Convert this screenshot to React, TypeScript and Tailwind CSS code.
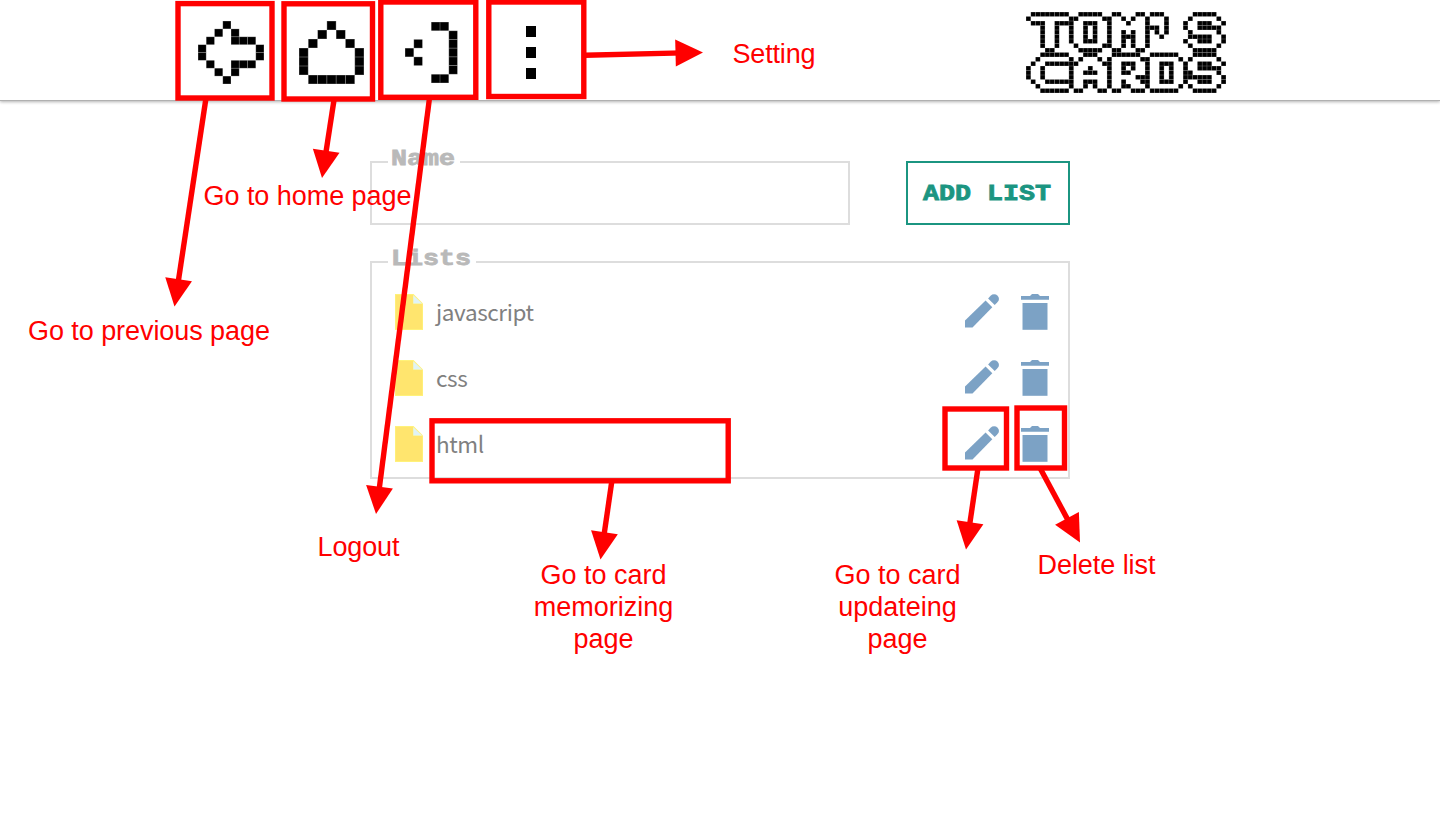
import React from "react";

type Run = [number, number];

// Each row lists the inclusive column runs that are inked.
const LOGO: Run[][] = [
  [[1, 8], [11, 15], [18, 19], [23, 24], [26, 28], [35, 39]],
  [[0, 0], [9, 10], [16, 17], [20, 20], [22, 22], [25, 25], [29, 29], [34, 34], [40, 40]],
  [[1, 3], [6, 9], [12, 14], [17, 17], [21, 21], [25, 25], [29, 29], [33, 33], [36, 38], [41, 41]],
  [[3, 3], [6, 6], [9, 9], [12, 12], [14, 14], [17, 17], [25, 27], [29, 29], [33, 33], [36, 40]],
  [[3, 3], [6, 6], [9, 9], [12, 12], [14, 14], [17, 17], [20, 20], [22, 22], [25, 25], [27, 27], [29, 29], [34, 34], [40, 40]],
  [[3, 3], [6, 6], [9, 9], [12, 12], [14, 14], [17, 17], [20, 22], [25, 25], [28, 28], [34, 38], [41, 41]],
  [[3, 3], [6, 6], [9, 9], [12, 14], [17, 17], [20, 20], [22, 22], [25, 25], [33, 33], [36, 38], [41, 41]],
  [[3, 3], [6, 6], [10, 10], [16, 17], [20, 20], [22, 22], [25, 25], [34, 34], [40, 40]],
  [[4, 5], [11, 15], [18, 19], [23, 24], [35, 39]],
  [[3, 8], [12, 14], [18, 23], [26, 31], [35, 39]],
  [[2, 2], [9, 9], [11, 11], [15, 15], [17, 17], [24, 25], [32, 32], [34, 34], [40, 40]],
  [[1, 1], [4, 10], [16, 17], [20, 22], [25, 25], [28, 30], [33, 33], [36, 38], [41, 41]],
  [[0, 0], [3, 3], [9, 9], [13, 13], [17, 17], [20, 20], [22, 22], [25, 25], [28, 28], [30, 30], [33, 33], [36, 40]],
  [[0, 0], [3, 3], [9, 9], [12, 14], [17, 17], [20, 21], [25, 25], [28, 28], [30, 30], [33, 34], [40, 40]],
  [[0, 0], [3, 3], [9, 9], [17, 17], [23, 25], [28, 28], [30, 30], [33, 38], [41, 41]],
  [[1, 1], [4, 9], [12, 14], [17, 17], [20, 20], [24, 25], [28, 30], [33, 33], [36, 38], [41, 41]],
  [[2, 2], [9, 9], [12, 12], [14, 14], [17, 17], [20, 21], [25, 25], [32, 32], [34, 34], [40, 40]],
  [[3, 8], [10, 11], [15, 16], [18, 19], [22, 24], [26, 31], [35, 39]],
];

const BACK: Run[][] = [
  [[3, 3]], [[2, 2], [4, 4]], [[1, 1], [4, 6]], [[0, 0], [7, 7]],
  [[0, 0], [7, 7]], [[1, 1], [4, 6]], [[2, 2], [4, 4]], [[3, 3]],
];
const HOME: Run[][] = [
  [[3, 3]], [[2, 2], [4, 4]], [[1, 1], [5, 5]], [[0, 0], [6, 6]],
  [[0, 0], [6, 6]], [[0, 0], [6, 6]], [[1, 5]],
];
const LOGOUT: Run[][] = [
  [[3, 4]], [[5, 5]], [[1, 1], [5, 5]], [[0, 0], [5, 5]],
  [[1, 1], [5, 5]], [[5, 5]], [[3, 4]],
];

function Pixels({ rows, cols, className, label, seam }: { rows: Run[][]; cols: number; className: string; label: string; seam: number }) {
  return (
    <svg viewBox={`0 0 ${cols} ${rows.length}`} preserveAspectRatio="none" className={className} role="img" aria-label={label}>
      {rows.flatMap((row, y) =>
        row.flatMap(([a, b]) =>
          Array.from({ length: b - a + 1 }, (_, i) => (
            <g key={`${y}-${a + i}`}>
              <rect x={a + i} y={y} width={1} height={1} fill="#555" />
              <rect x={a + i + seam} y={y + seam} width={1 - 2 * seam} height={1 - 2 * seam} fill="#000" />
            </g>
          ))
        )
      )}
    </svg>
  );
}

function FileIcon() {
  return (
    <svg viewBox="0 0 28 36" className="block h-9 w-7">
      <path d="M0 0h18.5L28 9.500V36H0z" fill="#fff27a" />
      <path d="M.8 1H18v9h9.200v25H.8z" fill="#ffe56e" />
      <path d="M18.300 1.200V9.500H27z" fill="#e0f3f6" />
    </svg>
  );
}

function PencilIcon() {
  return (
    <svg viewBox="0 0 34 34" className="block h-[34px] w-[34px]" fill="#7ca2c5">
      <path d="M0 26.500 20.600 6.600 27.300 13.300 7.500 33.600H0z" />
      <path d="M23.100 4.500 25.600 1.700A5 5 0 0 1 32.600 1.700 5 5 0 0 1 32.400 8.300L29.700 11z" />
    </svg>
  );
}

function TrashIcon() {
  return (
    <svg viewBox="0 0 28 36" className="block h-9 w-7" fill="#7ca2c5">
      <path d="M0 2h9l2-2h6l2 2h9v3.800H0z" />
      <path d="M1.500 9h25v26.800h-25z" />
    </svg>
  );
}

function Row({ name }: { name: string }) {
  return (
    <li className="flex h-[66px] items-center pr-[19px] pl-[23px]">
      <FileIcon />
      <span className="mb-[2px] ml-[13px] grow font-['Noto_Sans_CJK_SC','Noto_Sans',sans-serif] text-[22.5px] leading-9 tracking-[-0.4px] text-[#808080]">{name}</span>
      <button className="mr-[22px] mb-[2px]" aria-label="Edit"><PencilIcon /></button>
      <button aria-label="Delete"><TrashIcon /></button>
    </li>
  );
}

function PixelText({ children }: { children: React.ReactNode }) {
  return (
    <span className="inline-block origin-left scale-x-[1.212] font-['Liberation_Mono',monospace] text-[22px] leading-6 font-bold whitespace-pre [-webkit-text-stroke:0.8px_currentColor]">
      {children}
    </span>
  );
}

const BOXES = [
  [178, 3.6, 94, 94.400], [284, 3.8, 88.500, 95.200], [380.800, 2, 95, 95.300], [488.800, 2, 95, 94.500],
  [432, 420.800, 296.200, 60], [945, 409, 61.500, 59], [1017, 408, 47.500, 60],
];

// Start point, then the tip of the arrow head.
const ARROWS = [
  [206, 98, 174.500, 306.500], [334, 100, 322, 178], [429.500, 98, 376, 514], [585, 55.300, 703, 52.400],
  [612, 480, 600.500, 559.500], [978, 468, 966, 549.500], [1040, 468, 1080, 542.500],
];

function Arrow({ p }: { p: number[] }) {
  const [x1, y1, x2, y2] = p;
  const len = Math.hypot(x2 - x1, y2 - y1);
  const angle = (Math.atan2(y2 - y1, x2 - x1) * 180) / Math.PI;
  return (
    <g transform={`translate(${x1} ${y1}) rotate(${angle})`}>
      <path d={`M0 0H${len - 20}`} stroke="#f00" strokeWidth="5.4" />
      <path d={`M${len} 0l-27.500 -13.500v27z`} fill="#f00" />
    </g>
  );
}

const NOTES = [
  { lines: ["Setting"], x: 774, y: 62.500, w: 83 },
  { lines: ["Go to home page"], x: 307.500, y: 204.500, w: 208 },
  { lines: ["Go to previous page"], x: 149, y: 340, w: 242 },
  { lines: ["Logout"], x: 358.500, y: 555.500, w: 82 },
  { lines: ["Go to card", "memorizing", "page"], x: 603.500, y: 584, w: 0 },
  { lines: ["Go to card", "updateing", "page"], x: 897.500, y: 584, w: 0 },
  { lines: ["Delete list"], x: 1096.500, y: 574, w: 118 },
];

function Annotations() {
  return (
    <svg viewBox="0 0 1440 821" className="pointer-events-none absolute top-0 left-0 h-[821px] w-[1440px]">
      {BOXES.map(([x, y, w, h]) => (
        <rect key={x} x={x} y={y} width={w} height={h} fill="none" stroke="#f00" strokeWidth="5.4" />
      ))}
      {ARROWS.map((p) => <Arrow key={p[0]} p={p} />)}
      {NOTES.map((n) => (
        <text key={n.x} textAnchor="middle" fill="#f00" className="font-['Liberation_Sans',Arial,sans-serif] text-[27px]">
          {n.lines.map((l, i) => (
            <tspan key={l} x={n.x} y={n.y + i * 32} textLength={n.w || undefined}>{l}</tspan>
          ))}
        </text>
      ))}
    </svg>
  );
}

export default function App() {
  return (
    <div className="relative h-[821px] w-[1440px] overflow-hidden bg-white">
      <header className="flex h-[101px] items-start border-b border-[#b0b0b0] bg-white pr-[214px] pl-[198px] shadow-[0_1px_3px_rgba(0,0,0,0.3)]">
        <nav className="flex grow items-start">
          <Pixels rows={BACK} cols={8} label="Back" seam={0.05} className="mt-[21px] h-[63px] w-[66px]" />
          <Pixels rows={HOME} cols={7} label="Home" seam={0.05} className="mt-[21px] ml-[34.5px] h-[63px] w-[65px]" />
          <Pixels rows={LOGOUT} cols={6} label="Logout" seam={0.05} className="mt-[22px] ml-[41.5px] h-[61px] w-[52.5px]" />
          <div className="mt-[26px] ml-[68.5px] flex flex-col gap-[10.5px]">
            <i className="h-[10.5px] w-[10px] bg-black" />
            <i className="h-[10.5px] w-[10px] bg-black" />
            <i className="h-[10.5px] w-[10px] bg-black" />
          </div>
        </nav>
        <Pixels rows={LOGO} cols={42} label="Tom's Cards" seam={0.07} className="mt-3 h-[81px] w-[200px]" />
      </header>
      <main className="mx-auto w-[700px] pt-[60px]">
        <div className="flex justify-between">
          <div className="relative h-16 w-[480px] border-2 border-[#ddd]">
            <div className="absolute -top-4 left-4 h-6 w-[72px] bg-white pl-[3px] text-[#b9b9b9]"><PixelText>Name</PixelText></div>
          </div>
          <button className="h-16 w-[164px] border-2 border-[#1b9581] pt-[2px] pl-[15px] text-left text-[#1b9581]"><PixelText>ADD LIST</PixelText></button>
        </div>
        <section className="relative mt-9 h-[218px] border-2 border-[#ddd] pt-4">
          <div className="absolute -top-4 left-4 h-6 w-[88px] bg-white pl-[3px] text-[#b9b9b9]"><PixelText>Lists</PixelText></div>
          <ul>
            <Row name="javascript" />
            <Row name="css" />
            <Row name="html" />
          </ul>
        </section>
      </main>
      <Annotations />
    </div>
  );
}
